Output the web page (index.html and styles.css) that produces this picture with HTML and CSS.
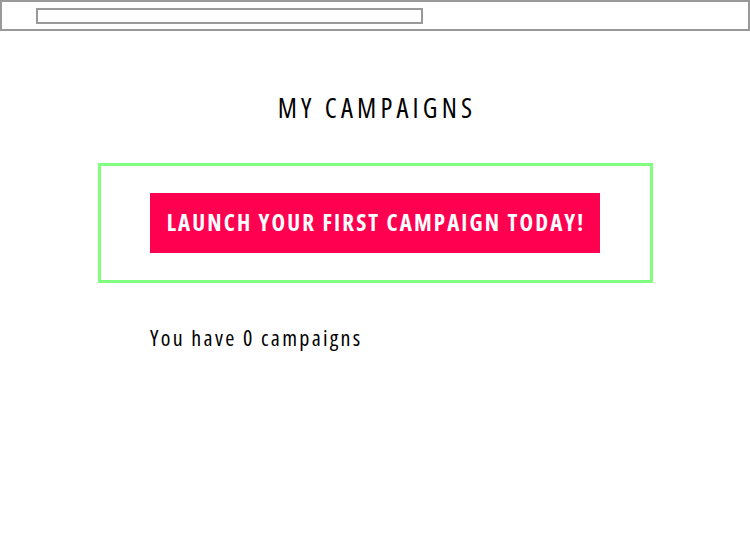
FILE: index.html
```html
<!DOCTYPE html>
<html>
<head>
<meta charset="utf-8">
<link rel="stylesheet" href="styles.css">
</head>
<body>
<div class="topbar"><div class="address"></div></div>
<main class="page">
  <h1 class="title">MY CAMPAIGNS</h1>
  <section class="promo">
    <button class="launch">LAUNCH YOUR FIRST CAMPAIGN TODAY!</button>
  </section>
  <p class="count">You have 0 campaigns</p>
</main>
</body>
</html>
```
FILE: styles.css
```css
* { box-sizing: border-box; }
body {
  margin: 0;
  width: 750px;
  height: 550px;
  background: #fff;
  font-family: "Open Sans", "DejaVu Sans", sans-serif;
  font-stretch: 75%;
  color: #000;
}
.topbar {
  height: 31px;
  border: 2px solid #999;
  padding: 6px 0 0 34px;
}
.address {
  width: 387px;
  height: 16px;
  border: 2px solid #999;
}
.page {
  display: flex;
  flex-direction: column;
  align-items: center;
}
.title {
  margin: 60px 0 0;
  padding-left: 4px;
  font-size: 27px;
  font-weight: 500;
  line-height: 34px;
  letter-spacing: 4.2px;
}
.promo {
  margin-top: 38px;
  width: 555px;
  height: 120px;
  border: 3px solid #80ff80;
  padding-top: 27px;
  display: flex;
  justify-content: center;
  align-items: flex-start;
}
.launch {
  width: 450px;
  height: 60px;
  border: 0;
  background: #ff0050;
  color: #fff;
  font-family: inherit;
  font-stretch: 75%;
  font-size: 23px;
  font-weight: 700;
  letter-spacing: 2.1px;
  padding: 0 0 3px 2px;
}
.count {
  align-self: flex-start;
  margin: 39px 0 0 150px;
  font-size: 22px;
  font-weight: 500;
  line-height: 30px;
  letter-spacing: 2.3px;
}
```
